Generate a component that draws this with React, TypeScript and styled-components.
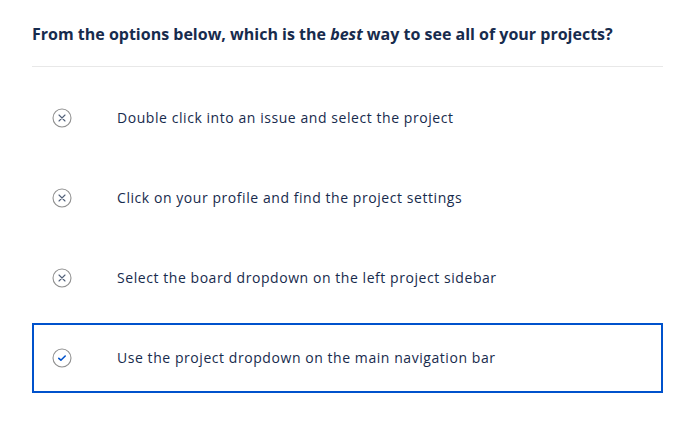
import React from "react";
import styled, { createGlobalStyle } from "styled-components";

const Global = createGlobalStyle`
  html, body { margin: 0; padding: 0; background: #ffffff; }
  body { font-family: "Open Sans", Lato, sans-serif; color: #172b4d; }
`;

const Page = styled.div`
  padding: 22px 24px 0 32px;
  width: 631px;
`;

const Heading = styled.h2`
  margin: 0;
  font-size: 16px;
  line-height: 24px;
  font-weight: 700;
  color: #172b4d;
  padding-bottom: 20px;
  border-bottom: 1px solid #e8e8e8;
  em { font-style: italic; }
`;

const List = styled.div`
  display: flex;
  flex-direction: column;
  gap: 10px;
  padding-top: 16px;
`;

const Option = styled.div<{ $selected?: boolean }>`
  display: flex;
  align-items: center;
  height: 70px;
  box-sizing: border-box;
  padding-left: 18px;
  border: 2px solid ${(p) => (p.$selected ? "#0052cc" : "transparent")};
`;

const IconBox = styled.span`
  display: flex;
  width: 20px;
  height: 20px;
  margin-right: 45px;
`;

const Label = styled.span`
  font-size: 14px;
  line-height: 20px;
  letter-spacing: 0.56px;
  color: #172b4d;
`;

const Cross = () => (
  <svg width="20" height="20" viewBox="0 0 20 20">
    <circle cx="10" cy="10" r="9" fill="none" stroke="#919191" strokeWidth="1.1" />
    <path d="M7 7 L13 13 M13 7 L7 13" stroke="#505f79" strokeWidth="1.1" strokeLinecap="round" />
  </svg>
);

const Check = () => (
  <svg width="20" height="20" viewBox="0 0 20 20">
    <circle cx="10" cy="10" r="9" fill="none" stroke="#919191" strokeWidth="1.1" />
    <path d="M6.8 10.3 L8.9 12.2 L13.2 8" fill="none" stroke="#0052cc" strokeWidth="1.6" strokeLinecap="round" strokeLinejoin="round" />
  </svg>
);

const options = [
  { text: "Double click into an issue and select the project", correct: false },
  { text: "Click on your profile and find the project settings", correct: false },
  { text: "Select the board dropdown on the left project sidebar", correct: false },
  { text: "Use the project dropdown on the main navigation bar", correct: true },
];

export default function App() {
  return (
    <>
      <Global />
      <Page>
        <Heading>
          From the options below, which is the <em>best</em> way to see all of your projects?
        </Heading>
        <List>
          {options.map((o) => (
            <Option key={o.text} $selected={o.correct}>
              <IconBox>{o.correct ? <Check /> : <Cross />}</IconBox>
              <Label>{o.text}</Label>
            </Option>
          ))}
        </List>
      </Page>
    </>
  );
}
